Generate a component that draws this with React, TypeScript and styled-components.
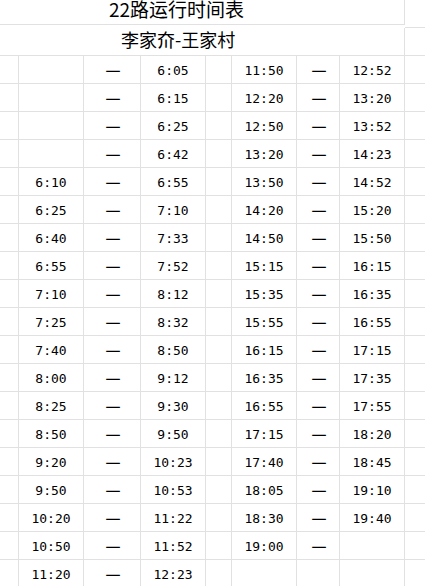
import styled, { createGlobalStyle } from "styled-components";

const GlobalStyle = createGlobalStyle`
    html, body {
        margin: 0;
        padding: 0;
        background: #fff;
    }
    body {
        font-family: "Noto Sans CJK SC", sans-serif;
        color: #000;
    }
`;

const colB = ["", "", "", "", "6:10", "6:25", "6:40", "6:55", "7:10", "7:25", "7:40", "8:00", "8:25", "8:50", "9:20", "9:50", "10:20", "10:50", "11:20"];
const colD = ["6:05", "6:15", "6:25", "6:42", "6:55", "7:10", "7:33", "7:52", "8:12", "8:32", "8:50", "9:12", "9:30", "9:50", "10:23", "10:53", "11:22", "11:52", "12:23"];
const colF = ["11:50", "12:20", "12:50", "13:20", "13:50", "14:20", "14:50", "15:15", "15:35", "15:55", "16:15", "16:35", "16:55", "17:15", "17:40", "18:05", "18:30", "19:00", ""];
const colH = ["12:52", "13:20", "13:52", "14:23", "14:52", "15:20", "15:50", "16:15", "16:35", "16:55", "17:15", "17:35", "17:55", "18:20", "18:45", "19:10", "19:40", "", ""];

export default function App() {
    return (
        <>
            <GlobalStyle />
            <Sheet>
                <TitleCell $size={19} $indent={109} $height={25} $line={18}>22路运行时间表</TitleCell>
                <Cell $edge />
                <TitleCell $size={18} $indent={121} $height={28} $line={23}>李家夼-王家村</TitleCell>
                <Cell $edge />
                {colD.map((d, i) => (
                    <Row key={i}>
                        <Cell />
                        <Cell $kind="time">{colB[i]}</Cell>
                        <Cell $kind="dash">一</Cell>
                        <Cell $kind="time">{d}</Cell>
                        <Cell />
                        <Cell $kind="time">{colF[i]}</Cell>
                        <Cell $kind="dash">{colF[i] ? "一" : ""}</Cell>
                        <Cell $kind="time">{colH[i]}</Cell>
                        <Cell $edge />
                    </Row>
                ))}
                <Row>
                    {Array.from({ length: 8 }).map((_, i) => <Cell key={i} />)}
                    <Cell $edge />
                </Row>
            </Sheet>
        </>
    );
}

const Sheet = styled.div`
    display: grid;
    grid-template-columns: 19px 65px 57px 65px 26px 65px 43px 65px 1fr;
    grid-auto-rows: auto;
    width: 425px;
    height: 586px;
    overflow: hidden;
`;

const Row = styled.div`
    display: contents;
`;

const TitleCell = styled.div<{ $size: number; $indent: number; $height: number; $line: number }>`
    grid-column: 1 / 9;
    box-sizing: border-box;
    height: ${p => p.$height}px;
    padding-left: ${p => p.$indent}px;
    border-right: 1px solid #e1e1e1;
    border-bottom: 1px solid #e1e1e1;
    font-size: ${p => p.$size}px;
    line-height: ${p => p.$line}px;
    white-space: nowrap;
`;

const Cell = styled.div<{ $kind?: "time" | "dash"; $edge?: boolean }>`
    box-sizing: border-box;
    height: 28px;
    border-bottom: 1px solid #e1e1e1;
    border-right: ${p => (p.$edge ? "none" : "1px solid #e1e1e1")};
    text-align: center;
    white-space: nowrap;
    padding-top: 2px;
    line-height: 25px;
    font-family: ${p => (p.$kind === "time" ? '"DejaVu Sans Mono", monospace' : '"Noto Sans CJK SC", sans-serif')};
    font-size: ${p => (p.$kind === "time" ? "13px" : "15px")};
    ${p => p.$kind === "dash" && "padding-left: 2px;"}
`;
